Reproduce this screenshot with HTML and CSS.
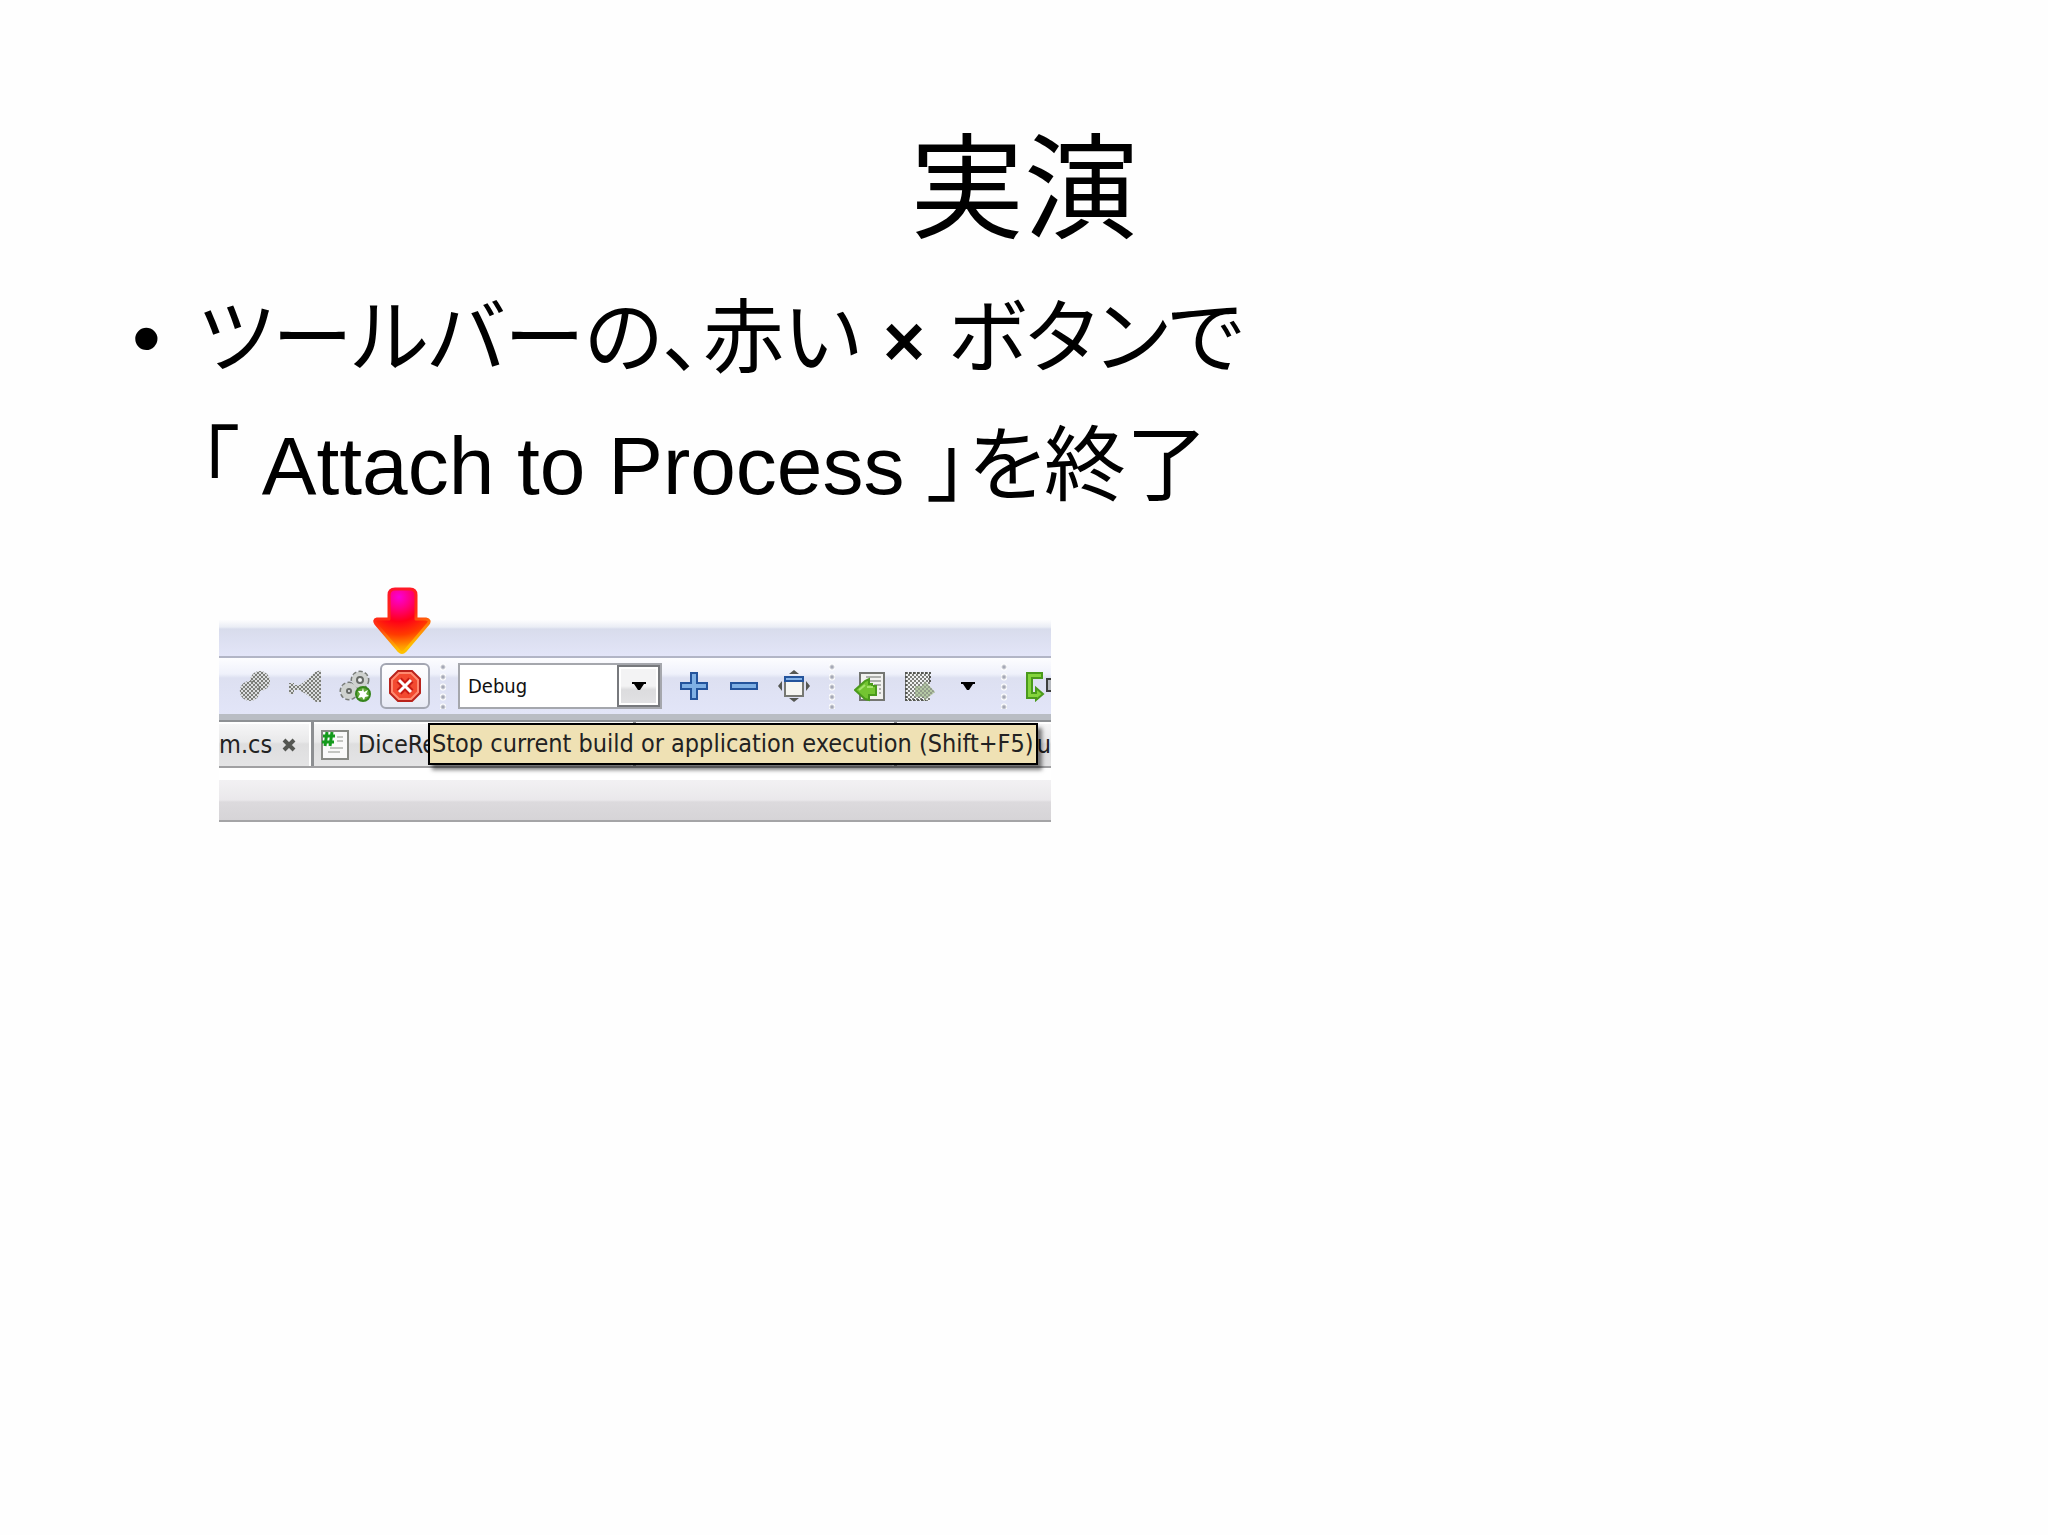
FILE: index.html
```html
<!DOCTYPE html>
<html lang="ja">
<head>
<meta charset="utf-8">
<title>実演</title>
<link rel="stylesheet" href="styles.css">
</head>
<body>
<main class="slide">
  <h1 class="title">実演</h1>
  <ul class="points">
    <li class="point"><span class="bullet">•</span><p class="point-text"><span class="kana">ツールバーの、赤い <b class="times">×</b> ボタンで</span><br>「 Attach to Process 」を終了</p></li>
  </ul>

  <figure class="shot">
    <svg class="pointer" viewBox="0 0 58 68" aria-hidden="true">
      <defs>
        <radialGradient id="hot" gradientUnits="userSpaceOnUse" cx="26" cy="10" r="58">
          <stop offset="0" stop-color="#f800d8"/><stop offset=".2" stop-color="#ff0080"/><stop offset=".42" stop-color="#ff0018"/><stop offset=".65" stop-color="#ff3a00"/><stop offset=".86" stop-color="#ff9a00"/><stop offset="1" stop-color="#ffc800"/>
        </radialGradient>
        <linearGradient id="rim" x1="0" y1="0" x2=".3" y2="1">
          <stop offset="0" stop-color="#ff1030"/><stop offset=".55" stop-color="#ff3010"/><stop offset="1" stop-color="#ffc000"/>
        </linearGradient>
      </defs>
      <path d="M16 8Q16 2 22 2H37Q43 2 43 8V32H53Q58 33 55 37L32 64Q29 67 26 64L3 37Q0 33 4 32H16Z" fill="url(#hot)" stroke="url(#rim)" stroke-width="3" stroke-linejoin="round"/>
    </svg>

    <div class="window">
      <div class="menubar"></div>
      <div class="toolbar">
        <button class="tool" aria-label="Build">
          <svg class="icon" viewBox="0 0 32 32">
            <defs><pattern id="dither" width="4" height="4" patternUnits="userSpaceOnUse"><path fill="#7c7e79" d="M0 0h2v2H0zM2 2h2v2H2z"/></pattern></defs>
            <g fill="#dcdee0"><circle cx="11" cy="21" r="10"/><circle cx="21" cy="11" r="10"/></g>
            <path d="M11 11a10 10 0 1 0 9 14q1-3 1-4a10 10 0 1 0-10-10z" fill="url(#dither)"/>
            <path d="M11 11q9 0 10 10" fill="none" stroke="#71746e"/>
          </svg>
        </button>
        <button class="tool" aria-label="Build all">
          <svg class="icon" viewBox="0 0 32 32">
            <path d="M32 0V32H27L17 24 10 20H5V24H0V13H5V15H11L20 8 26 2Z" fill="#dcdee0"/>
            <path d="M32 0V32H27L17 24 10 20H5V24H0V13H5V15H11L20 8 26 2Z" fill="url(#dither)"/>
          </svg>
        </button>
        <button class="tool" aria-label="Run">
          <svg class="icon" viewBox="0 0 32 32">
            <g fill="#c6c9c6" stroke="#777b77" stroke-width="3">
              <circle cx="10" cy="21" r="8" stroke-dasharray="4 2"/><circle cx="21" cy="10" r="8" stroke-dasharray="4 2"/>
            </g>
            <g fill="#cfd2cf"><circle cx="10" cy="21" r="8"/><circle cx="21" cy="10" r="8"/></g>
            <g fill="#f1f3f4" stroke="#666a66" stroke-width="2"><circle cx="10" cy="21" r="2"/><circle cx="21" cy="10" r="3"/></g>
            <circle cx="24" cy="24" r="7" fill="#62a838" stroke="#35841c" stroke-width="2"/>
            <path d="M24 18l1 4 4-2-2 4 3 2-4 1-1 3-2-3-4 1 2-4-2-3 4 0z" fill="#fff"/>
          </svg>
        </button>
        <button class="tool tool-hover" aria-label="Stop">
          <svg class="icon" viewBox="0 0 32 32">
            <path d="M9 1H23L31 9V23L23 31H9L1 23V9Z" fill="#f34a30" stroke="#b9231c" stroke-width="2"/>
            <path d="M10 3H22L29 10V22L22 29H10L3 22V10Z" fill="none" stroke="#ff8a70" stroke-width="2"/>
            <path d="M10 10L22 22M22 10L10 22" stroke="#c81c14" stroke-width="7"/>
            <path d="M10 10L22 22M22 10L10 22" stroke="#fff" stroke-width="3"/>
          </svg>
        </button>
        <span class="grip"></span>
        <label class="combo">
          <select class="combo-select" aria-label="Configuration"><option>Debug</option></select>
          <span class="combo-arrow"><svg class="caret" viewBox="0 0 14 8"><path d="M0 0H14V2H12L8 8H6L2 2H0Z"/></svg></span>
        </label>
        <button class="tool" aria-label="Zoom in">
          <svg class="icon" viewBox="0 0 32 32"><path d="M13 3H19V13H29V19H19V29H13V19H3V13H13Z" fill="#7fb0e4" stroke="#24549c" stroke-width="2"/></svg>
        </button>
        <button class="tool" aria-label="Zoom out">
          <svg class="icon" viewBox="0 0 32 32"><path d="M3 13H29V19H3Z" fill="#7fb0e4" stroke="#24549c" stroke-width="2"/></svg>
        </button>
        <button class="tool" aria-label="Fit to window">
          <svg class="icon" viewBox="0 0 32 32">
            <path d="M7 7H25V26H7Z" fill="#f6f6f2" stroke="#777973" stroke-width="2"/>
            <path d="M6 6H26V12H6Z" fill="#24549c"/><path d="M8 8H24V10H8Z" fill="#86b4e8"/>
            <path d="M16 0L21 4H11ZM16 32L21 28H11ZM0 16L4 11V21ZM32 16L28 11V21Z" fill="#555753"/>
          </svg>
        </button>
        <span class="grip"></span>
        <button class="tool" aria-label="Back">
          <svg class="icon" viewBox="0 0 32 32">
            <path d="M6 3H30V30H6Z" fill="#f1f1ef" stroke="#747672" stroke-width="2"/>
            <path d="M12 7H27M15 11H27M20 15H27M25 19H27M25 23H27" stroke="#aeb0ad" stroke-width="2"/>
            <path d="M1 20L11 11 15 9V14H18V16H22V25H15V30L11 29Z" fill="#73c431" stroke="#4a9a1c" stroke-width="2"/>
            <path d="M5 20L11 15M13 17H19" stroke="#a5e36c" stroke-width="2"/>
          </svg>
        </button>
        <button class="tool" aria-label="Forward" disabled>
          <svg class="icon" viewBox="0 0 32 32">
            <path d="M1 2H26V31H1Z" fill="#f0f1f2"/><path d="M1 2H26V31H1Z" fill="url(#dither)"/>
            <path d="M1 3H26M2 2V31M26 2V14M1 30H22" stroke="#555753" stroke-width="2" stroke-dasharray="2 2"/>
            <path d="M11 16H18L21 11 31 22 20 31V27H11Z" fill="#b4c8a4"/><path d="M11 16H18L21 11 31 22 20 31V27H11Z" fill="url(#dither)" opacity=".6"/>
          </svg>
        </button>
        <button class="tool tool-menu" aria-label="More"><svg class="caret" viewBox="0 0 14 8"><path d="M0 0H14V2H12L8 8H6L2 2H0Z"/></svg></button>
        <span class="grip"></span>
        <button class="tool" aria-label="Step over">
          <svg class="icon" viewBox="0 0 32 32">
            <path d="M1 3H16V8H6V23H10V18L17 24 10 30V28H1Z" fill="#84d43c" stroke="#4a9a1c" stroke-width="2"/>
            <path d="M21 9H31V21H21Z" fill="#b7bac0" stroke="#3c3e3c" stroke-width="2"/>
          </svg>
        </button>
      </div>
      <div class="tabs">
        <div class="tab">m.cs<svg class="close" viewBox="0 0 14 14"><path d="M2 2L12 12M12 2L2 12" stroke="#555753" stroke-width="4"/></svg></div>
        <div class="tab tab-file">
          <svg class="file" viewBox="0 0 28 30">
            <path d="M1 1H27V29H1Z" fill="#fafafa" stroke="#888a85" stroke-width="2"/>
            <path d="M16 7H22M16 11H22M9 18H22M7 22H19" stroke="#c4c6c2" stroke-width="2"/>
            <path d="M6 2L4 16M11 2L9 16M2 6H14M1 12H13" stroke="#149a1c" stroke-width="3"/>
          </svg>DiceRe</div>
        <div class="tab"></div>
        <div class="tab tab-last">u</div>
      </div>
      <div class="gap"></div>
      <div class="panel"></div>
    </div>
    <div class="tooltip" role="tooltip">Stop current build or application execution (Shift+F5)</div>
  </figure>
</main>
</body>
</html>
```
FILE: styles.css
```css
* { box-sizing: border-box; }

body {
  margin: 0;
  background: #fefefe;
  color: #000;
  font-family: "Liberation Sans", "Noto Sans CJK JP", sans-serif;
}

.slide { padding: 86px 128px; }

.title {
  margin: 0;
  font: 400 114px/188px "Noto Sans CJK JP", sans-serif;
  text-align: center;
}

.points { margin: 0; padding: 0; list-style: none; }

.point {
  display: flex;
  font-size: 82px;
  line-height: 128px;
}

.bullet { flex: none; width: 70px; padding-left: 4px; }

.point-text { margin: 0; font-feature-settings: "palt"; }

.kana { font-size: 81px; line-height: 1; }

.times { font-size: 72px; }

/* IDE toolbar illustration */
.shot {
  position: relative;
  max-width: 832px;
  margin: 90px 0 0 91px;
  font: 25px/44px "DejaVu Sans Condensed", "DejaVu Sans", sans-serif;
  color: #222;
}

.window { overflow: hidden; }

.pointer {
  position: absolute;
  top: -33px;
  left: 154px;
  width: 58px;
  height: 68px;
}

.menubar {
  height: 38px;
  border-bottom: 2px solid #b2b5c6;
  background: linear-gradient(#fdfdfe 0, #eaedf5 7px, #d8dcec 9px, #e3e5f8 100%);
}

.toolbar {
  display: flex;
  align-items: center;
  height: 62px;
  padding-left: 11px;
  border-bottom: 6px solid #b9bdc4;
  background: linear-gradient(#fdfdff 0, #eff1fb 16px, #dde0f1 20px, #e2e5f8 100%);
}

.tool {
  display: flex;
  flex: none;
  align-items: center;
  justify-content: center;
  width: 50px;
  height: 46px;
  padding: 0;
  border: 2px solid transparent;
  border-radius: 6px;
  background: none;
}

.tool-hover {
  border-color: #a3a6b2;
  background: linear-gradient(#fff, #f5f6fb 50%, #e8eaf5);
}

.tool-menu { width: 46px; }

.icon { flex: none; width: 32px; height: 32px; }

.caret { width: 14px; height: 8px; }

.grip {
  flex: none;
  width: 6px;
  height: 46px;
  margin: 0 10px;
  background: radial-gradient(circle at 3px 4px, #a6a9b6 1px, #fff 3px, transparent 4px) 0 0 / 6px 10px;
}

.combo {
  display: grid;
  flex: none;
  width: 204px;
  height: 46px;
  margin: 0 7px 0 2px;
}

.combo-select {
  grid-area: 1 / 1;
  appearance: none;
  padding: 0 8px;
  border: 2px solid #a5a7ad;
  border-radius: 0;
  background: #fff;
  color: #111;
  font: 20px "DejaVu Sans Condensed", "DejaVu Sans", sans-serif;
}

.combo-arrow {
  display: flex;
  grid-area: 1 / 1;
  align-items: center;
  justify-content: center;
  justify-self: end;
  width: 43px;
  margin: 2px;
  border: 2px solid #77797d;
  box-shadow: inset 0 0 0 2px #fff;
  background: linear-gradient(#f3f3f4 50%, #dcdcde 60%, #e2e2e4);
  pointer-events: none;
}

.tabs {
  display: grid;
  grid-template-columns: 95px 322px 261px 1fr;
  height: 48px;
  border-top: 2px solid #8d9094;
  border-bottom: 2px solid #a0a0a2;
}

.tab {
  display: flex;
  align-items: center;
  overflow: hidden;
  padding-top: 2px;
  border-right: 3px solid #8d8f92;
  box-shadow: inset 0 2px #fff, inset -2px 0 #fff;
  background: linear-gradient(#f7f7f8 0, #e9e9ea 45%, #dededf 50%, #e4e4e5 100%);
}

.tab-file { padding-left: 7px; }

.tab-last { justify-content: flex-end; border-right: 0; box-shadow: inset 0 2px #fff; }

.close { width: 14px; height: 14px; margin-left: 10px; }

.file { width: 28px; height: 30px; margin-right: 9px; }

.gap { height: 12px; background: #fff; }

.panel {
  height: 42px;
  border-bottom: 2px solid #a4a4a6;
  background: linear-gradient(#f2f1f3 0, #eae8eb 20px, #dcdadd 22px, #d6d4d7 100%);
}

.tooltip {
  position: absolute;
  top: 103px;
  left: 209px;
  padding: 0 2px;
  border: 2px solid #000;
  background: #efe1b4;
  box-shadow: 4px 5px 4px rgba(0, 0, 0, .5);
  line-height: 38px;
  white-space: nowrap;
}
```
